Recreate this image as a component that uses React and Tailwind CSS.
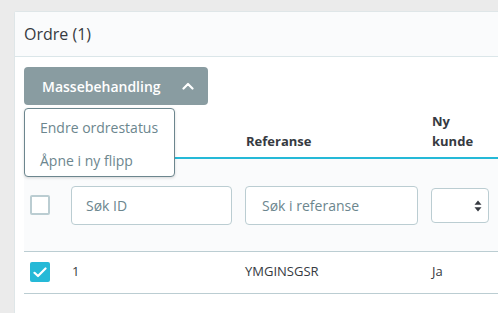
import React from "react";

function SortIcon() {
  return (
    <svg width="8" height="12" viewBox="0 0 8 12" className="block">
      <path d="M4 0.5 L7.5 4.8 L0.5 4.8 Z" fill="#363a41" />
      <path d="M4 11.5 L7.5 7.2 L0.5 7.2 Z" fill="#363a41" />
    </svg>
  );
}

function Chevron() {
  return (
    <svg width="12" height="8" viewBox="0 0 12 8" className="block">
      <path d="M1.5 6.5 L6 2 L10.5 6.5" fill="none" stroke="#ffffff" strokeWidth="2.2" strokeLinecap="round" strokeLinejoin="round" />
    </svg>
  );
}

export default function App() {
  const font = { fontFamily: '"Open Sans", "Noto Sans", sans-serif' };
  return (
    <div className="w-[498px] h-[313px] overflow-hidden bg-[#ebebeb] pl-[14px] pt-[11px]" style={font}>
      <div className="w-[520px] h-[340px] bg-white border-l border-t border-[#dfe6e8] rounded-tl-[3px]">
        <div className="h-[45px] bg-[#fafbfc] border-b border-[#dbe6e9] flex items-center pl-[9px]">
          <span className="text-[16px] text-[#363a41] leading-none">Ordre (1)</span>
        </div>
        <div className="pl-[9px] pt-[10px] relative">
          <div className="relative">
            <button className="w-[184px] h-[38px] bg-[#899ca1] rounded-[4px] flex items-center pl-[18px] gap-[21px] text-white text-[14px] font-semibold">
              <span>Massebehandling</span>
              <Chevron />
            </button>
            <div className="absolute left-0 top-[41px] w-[151px] h-[69px] bg-white border border-[#6c868e] rounded-[4px] shadow-[0_1px_3px_rgba(0,0,0,0.15)] z-10 flex flex-col text-[14px] text-[#6c868e]">
              <div className="h-[35px] flex items-center pl-[15px] pt-[2px]">Endre ordrestatus</div>
              <div className="h-[32px] flex items-center pl-[15px] pt-[1px]">Åpne i ny flipp</div>
            </div>
          </div>
          <table className="border-collapse table-fixed w-[500px] text-[13px]">
            <colgroup>
              <col className="w-[40px]" />
              <col className="w-[175px]" />
              <col className="w-[186px]" />
              <col className="w-[99px]" />
            </colgroup>
            <thead>
              <tr className="border-b-2 border-[#25b9d7]">
                <th className="h-[53px]"></th>
                <th></th>
                <th className="text-left align-bottom pb-[6px] pl-[7px] font-bold text-[#363a41] leading-[19.5px]">Referanse</th>
                <th className="text-left align-bottom pb-[6px] pl-[7px] font-bold text-[#363a41] leading-[19.5px]">Ny<br />kunde</th>
              </tr>
            </thead>
            <tbody>
              <tr className="bg-[#fafbfc] border-b border-[#bbcdd2]">
                <td className="h-[93px] pl-[6px] align-middle">
                  <div className="w-[20px] h-[20px] border-2 border-[#bbcdd2] rounded-[2px] bg-white"></div>
                </td>
                <td className="pl-[7px] align-middle">
                  <div className="w-[161px] h-[39px] border border-[#bbcdd2] rounded-[4px] bg-white flex items-center pl-[14px] text-[14px] text-[#6c868e] mt-[2px]">Søk ID</div>
                </td>
                <td className="pl-[6px] align-middle">
                  <div className="w-[173px] h-[39px] border border-[#bbcdd2] rounded-[4px] bg-white flex items-center pl-[16px] text-[14px] text-[#6c868e] mt-[2px]">Søk i referanse</div>
                </td>
                <td className="pl-[6px] align-middle">
                  <div className="w-[58px] h-[35px] border border-[#bbcdd2] rounded-[4px] bg-white flex items-center justify-end pr-[6px] mt-[2px]">
                    <SortIcon />
                  </div>
                </td>
              </tr>
              <tr className="border-b border-[#bbcdd2]">
                <td className="h-[42px] pl-[6px] align-middle">
                  <div className="w-[20px] h-[20px] rounded-[2px] bg-[#25b9d7] flex items-center justify-center">
                    <svg width="14" height="11" viewBox="0 0 14 11">
                      <path d="M1.5 5.8 L5 9 L12.5 1.5" fill="none" stroke="#ffffff" strokeWidth="2.2" strokeLinecap="round" strokeLinejoin="round" />
                    </svg>
                  </div>
                </td>
                <td className="pl-[8px] text-[#363a41]">1</td>
                <td className="pl-[6px] text-[#363a41]">YMGINSGSR</td>
                <td className="pl-[7px] text-[#363a41]">Ja</td>
              </tr>
            </tbody>
          </table>
        </div>
      </div>
    </div>
  );
}
